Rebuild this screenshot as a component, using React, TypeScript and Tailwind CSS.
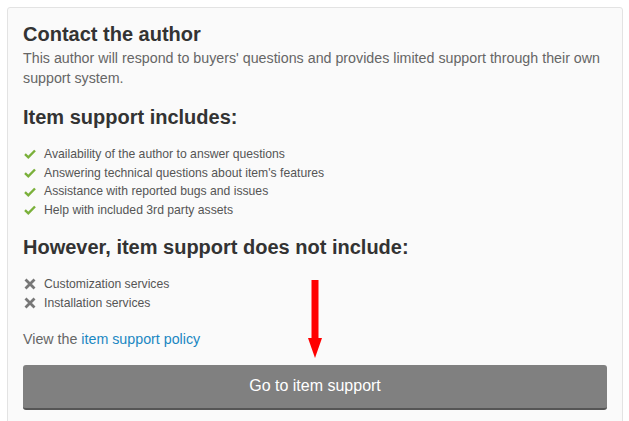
import React from 'react';

const INCLUDES = [
  'Availability of the author to answer questions',
  "Answering technical questions about item's features",
  'Assistance with reported bugs and issues',
  'Help with included 3rd party assets',
];

const EXCLUDES = ['Customization services', 'Installation services'];

function Check() {
  return (
    <svg width="12" height="10" viewBox="0 0 12 10" className="shrink-0">
      <path d="M1 5.2 L4.3 8.3 L11 1.5" fill="none" stroke="#7ab03a" strokeWidth="2.4" strokeLinejoin="miter" />
    </svg>
  );
}

function Cross() {
  return (
    <svg width="12" height="12" viewBox="0 0 12 12" className="shrink-0">
      <path d="M1.5 1.5 L10.5 10.5 M10.5 1.5 L1.5 10.5" fill="none" stroke="#777" strokeWidth="2.8" />
    </svg>
  );
}

export default function App() {
  return (
    <div className="w-[629px] h-[421px] overflow-hidden bg-white pl-[7px] pt-[7px] font-['Liberation_Sans',Arial,sans-serif]">
      <div className="relative w-[616px] h-[430px] bg-[#fafafa] border border-[#e3e3e3] rounded-[3px] px-[15px] pt-[15px]">
        <h2 className="text-[20px] leading-[22px] font-bold text-[#333]">Contact the author</h2>
        <p className="text-[14.25px] leading-[20px] text-[#666] mt-[3px]">
          This author will respond to buyers' questions and provides limited support through their own support system.
        </p>

        <h3 className="text-[20px] leading-[22px] font-bold text-[#333] mt-[18px]">Item support includes:</h3>
        <ul className="mt-[17px]">
          {INCLUDES.map((t) => (
            <li key={t} className="flex items-center gap-[8px] text-[12.2px] leading-[18.7px] text-[#555] pl-[1px]">
              <Check />
              {t}
            </li>
          ))}
        </ul>

        <h3 className="text-[20px] leading-[22px] font-bold text-[#333] mt-[16px]">However, item support does not include:</h3>
        <ul className="mt-[17px]">
          {EXCLUDES.map((t) => (
            <li key={t} className="flex items-center gap-[8px] text-[12.2px] leading-[19px] text-[#555] pl-[1px]">
              <Cross />
              {t}
            </li>
          ))}
        </ul>

        <p className="text-[14.25px] leading-[20px] text-[#666] mt-[16px]">
          View the <a className="text-[#1a87c2]">item support policy</a>
        </p>

        <button className="mt-[16px] w-full h-[45px] bg-[#808080] border-b-2 border-[#555] rounded-[3px] text-white text-[16px]">
          Go to item support
        </button>

        {/* red arrow overlay */}
        <svg className="absolute left-[299px] top-[272px]" width="16" height="80" viewBox="0 0 16 80">
          <rect x="4.5" y="0" width="7" height="59" fill="#ff0000" />
          <path d="M1 58 L15 58 L8 78 Z" fill="#ff0000" />
        </svg>
      </div>
    </div>
  );
}
